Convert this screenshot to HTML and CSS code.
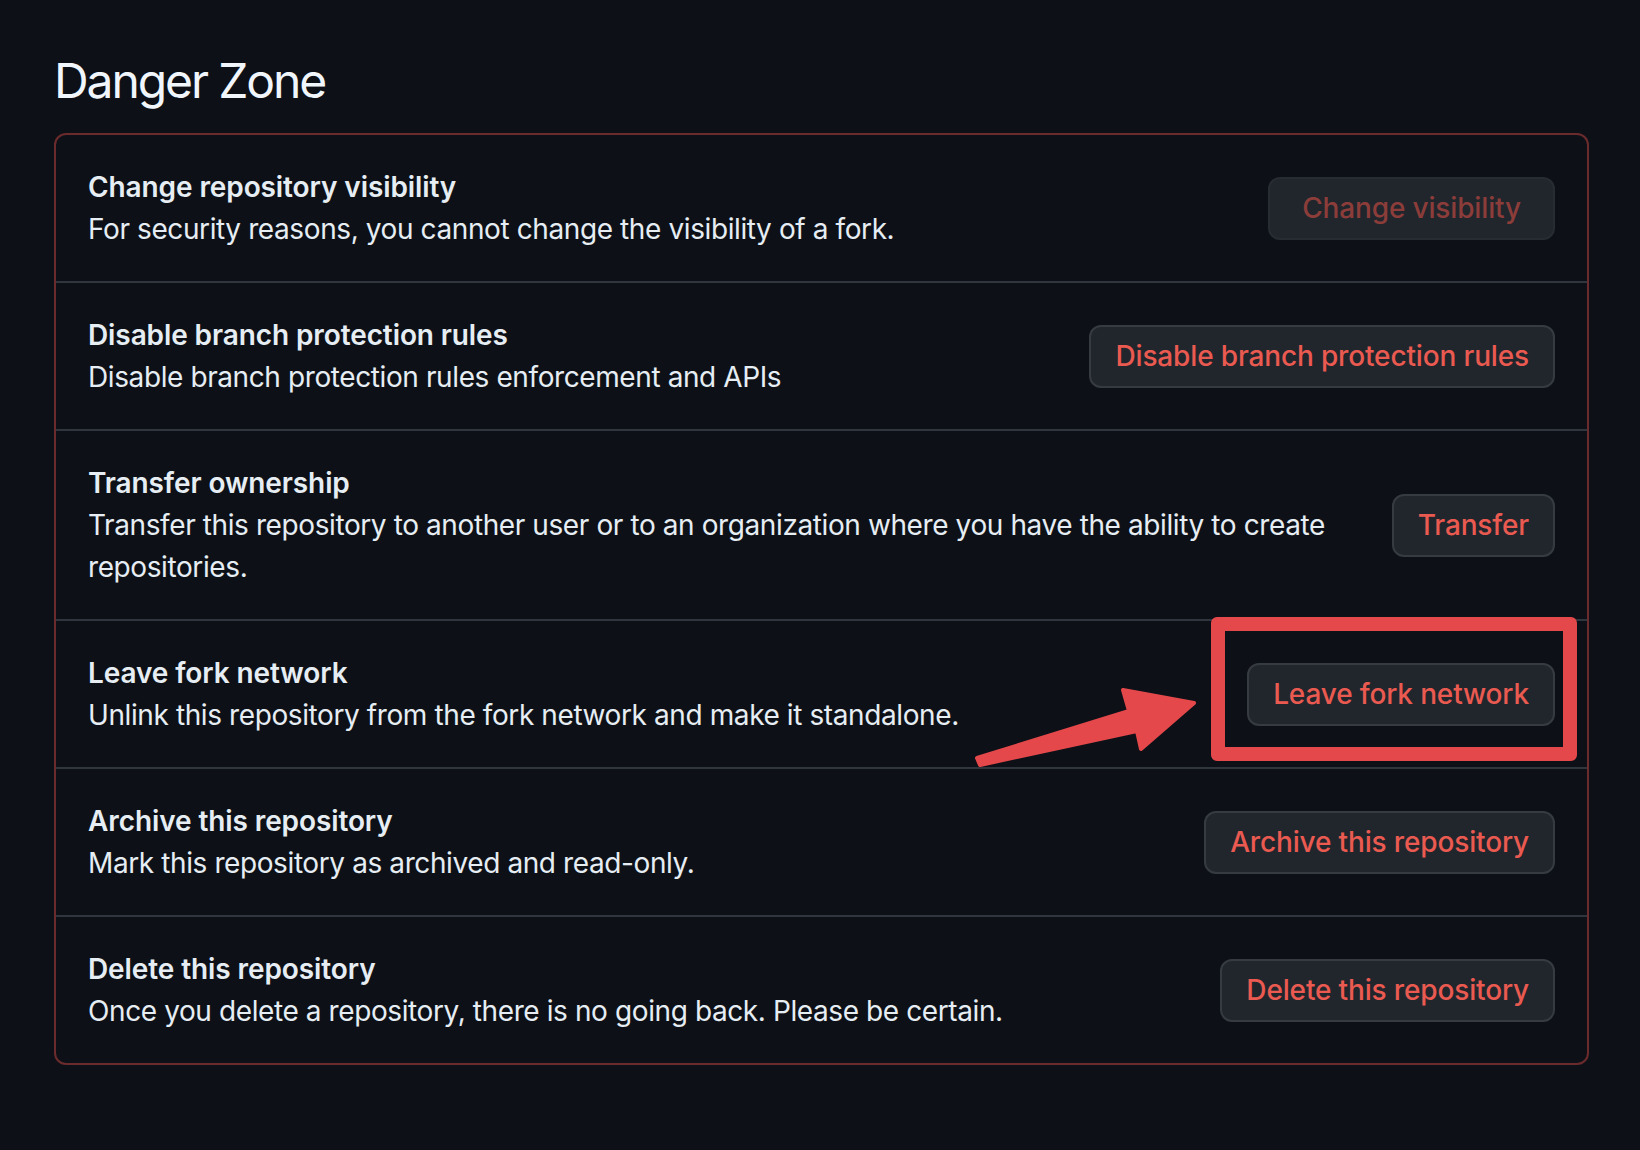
FILE: index.html
```html
<!DOCTYPE html>
<html lang="en">
<head>
<meta charset="utf-8">
<title>Danger Zone</title>
<link rel="stylesheet" href="styles.css">
</head>
<body>
<div class="page">
  <h2 class="heading">Danger Zone</h2>
  <div class="box">
    <div class="row">
      <div class="info">
        <strong class="title">Change repository visibility</strong>
        <p class="desc">For security reasons, you cannot change the visibility of a fork.</p>
      </div>
      <button class="btn btn-wide" disabled>Change visibility</button>
    </div>
    <div class="row">
      <div class="info">
        <strong class="title">Disable branch protection rules</strong>
        <p class="desc">Disable branch protection rules enforcement and APIs</p>
      </div>
      <button class="btn">Disable branch protection rules</button>
    </div>
    <div class="row">
      <div class="info">
        <strong class="title">Transfer ownership</strong>
        <p class="desc">Transfer this repository to another user or to an organization where you have the ability to create repositories.</p>
      </div>
      <button class="btn">Transfer</button>
    </div>
    <div class="row">
      <div class="info">
        <strong class="title">Leave fork network</strong>
        <p class="desc">Unlink this repository from the fork network and make it standalone.</p>
      </div>
      <button class="btn">Leave fork network</button>
    </div>
    <div class="row">
      <div class="info">
        <strong class="title">Archive this repository</strong>
        <p class="desc">Mark this repository as archived and read-only.</p>
      </div>
      <button class="btn">Archive this repository</button>
    </div>
    <div class="row">
      <div class="info">
        <strong class="title">Delete this repository</strong>
        <p class="desc">Once you delete a repository, there is no going back. Please be certain.</p>
      </div>
      <button class="btn">Delete this repository</button>
    </div>
  </div>

  <div class="highlight"></div>
  <svg class="arrow" width="1640" height="1150" viewBox="0 0 1640 1150" aria-hidden="true">
    <polygon points="977,758 1129,711 1123,690 1194,703 1141,749 1137,731 980,765"
      fill="#e5484b" stroke="#e5484b" stroke-width="4" stroke-linejoin="round"/>
  </svg>
</div>
</body>
</html>
```

FILE: styles.css
```css
html, body {
  margin: 0;
  padding: 0;
  background: #0d1117;
}

body {
  width: 1640px;
  height: 1150px;
  overflow: hidden;
  font-family: Inter, "Noto Sans", "Liberation Sans", sans-serif;
  color: #e6edf3;
}

.page {
  position: relative;
  padding: 51px 0 0 54px;
  width: 1640px;
  height: 1150px;
  box-sizing: border-box;
}

.heading {
  margin: 0 0 22px 0;
  font-size: 48px;
  line-height: 60px;
  font-weight: 400;
  color: #f0f6fc;
  letter-spacing: -2.1px;
}

.box {
  width: 1535px;
  box-sizing: border-box;
  border: 2px solid #6b2b2c;
  border-radius: 12px;
}

.row {
  display: flex;
  align-items: center;
  justify-content: space-between;
  gap: 32px;
  padding: 31px 32px 31px 32px;
  border-top: 2px solid #30363d;
}

.row:first-child {
  border-top: none;
}

.info {
  flex: 1 1 auto;
  min-width: 0;
}

.title {
  display: block;
  font-size: 28px;
  line-height: 42px;
  font-weight: 600;
  letter-spacing: -0.1px;
}

.desc {
  margin: 0;
  font-size: 28px;
  line-height: 42px;
  font-weight: 400;
  letter-spacing: -0.4px;
}

.btn {
  flex: 0 0 auto;
  height: 63px;
  padding: 0 24px;
  box-sizing: border-box;
  border: 2px solid #363b42;
  border-radius: 12px;
  background: #21262d;
  color: #ea5a50;
  font-family: Inter, "Noto Sans", "Liberation Sans", sans-serif;
  font-size: 28px;
  font-weight: 500;
  line-height: 40px;
  letter-spacing: -0.15px;
  white-space: nowrap;
}

.btn-wide {
  padding: 0 32px;
}

.btn:disabled {
  color: #8c3d3a;
  border-color: #272c33;
}

.highlight {
  position: absolute;
  left: 1211px;
  top: 617px;
  width: 366px;
  height: 144px;
  box-sizing: border-box;
  border: 14px solid #e5484b;
  border-radius: 6px;
}

.arrow {
  position: absolute;
  left: 0;
  top: 0;
  pointer-events: none;
}
```
